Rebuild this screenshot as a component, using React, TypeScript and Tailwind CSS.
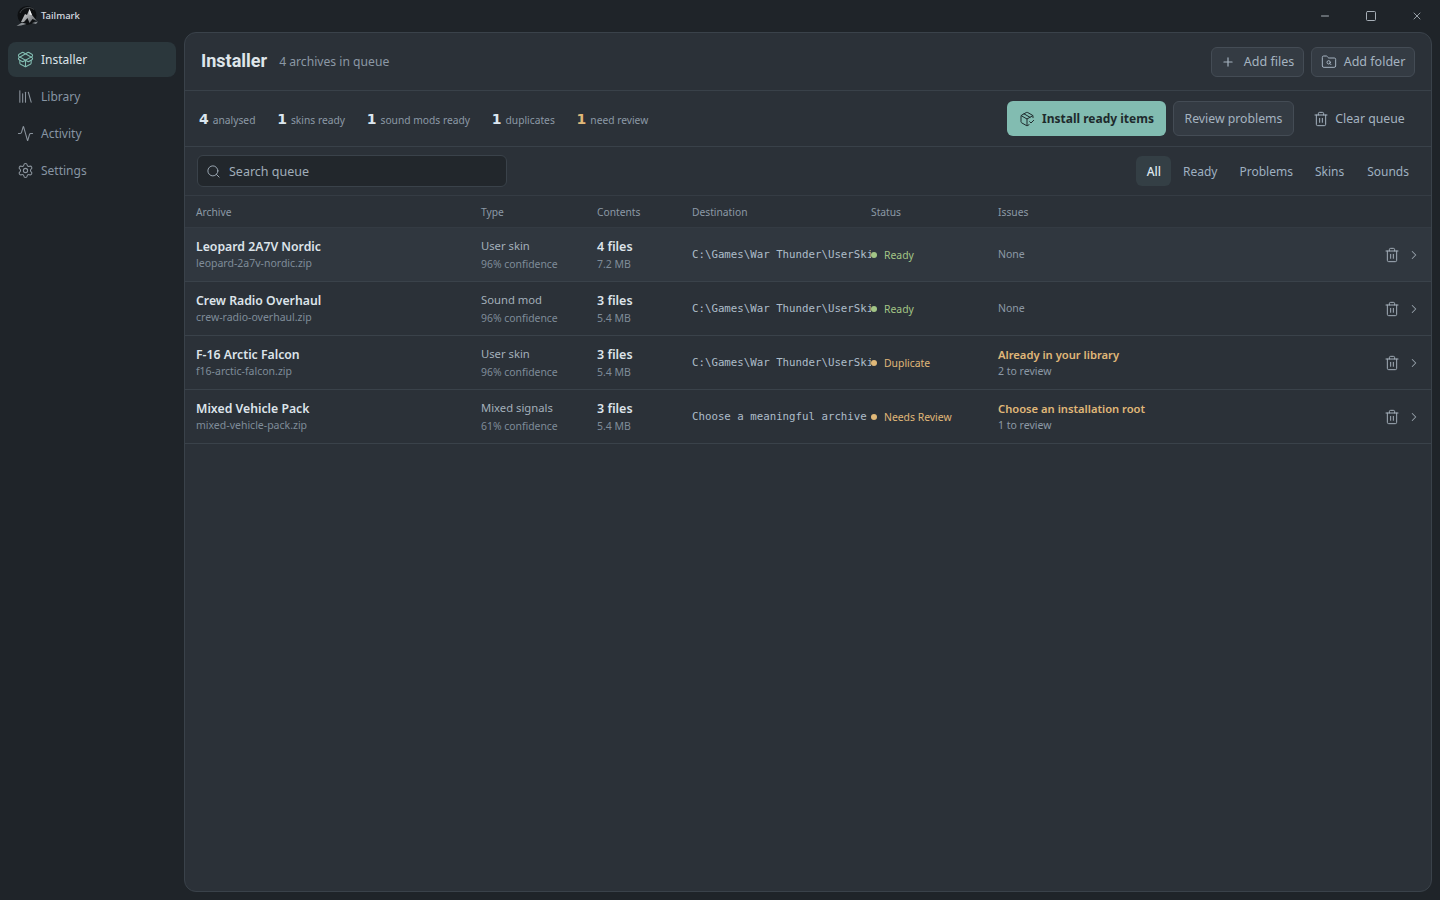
import {
  ChevronRight,
  FolderSearch2,
  Library,
  Activity,
  Minus,
  PackageCheck,
  PackageOpen,
  Plus,
  Search,
  Settings,
  Square,
  Trash2,
  X,
} from "lucide-react";

const navItems = [
  { label: "Installer", icon: PackageOpen, active: true },
  { label: "Library", icon: Library },
  { label: "Activity", icon: Activity },
  { label: "Settings", icon: Settings },
];

const stats = [
  { value: "4", label: "analysed" },
  { value: "1", label: "skins ready" },
  { value: "1", label: "sound mods ready" },
  { value: "1", label: "duplicates" },
  { value: "1", label: "need review", warn: true },
];

const filters = ["All", "Ready", "Problems", "Skins", "Sounds"];

const rows = [
  {
    name: "Leopard 2A7V Nordic",
    file: "leopard-2a7v-nordic.zip",
    type: "User skin",
    confidence: "96% confidence",
    files: "4 files",
    size: "7.2 MB",
    dest: "C:\\Games\\War Thunder\\UserSkins",
    status: "Ready",
    ok: true,
    issue: "None",
    hover: true,
  },
  {
    name: "Crew Radio Overhaul",
    file: "crew-radio-overhaul.zip",
    type: "Sound mod",
    confidence: "96% confidence",
    files: "3 files",
    size: "5.4 MB",
    dest: "C:\\Games\\War Thunder\\UserSkins",
    status: "Ready",
    ok: true,
    issue: "None",
  },
  {
    name: "F-16 Arctic Falcon",
    file: "f16-arctic-falcon.zip",
    type: "User skin",
    confidence: "96% confidence",
    files: "3 files",
    size: "5.4 MB",
    dest: "C:\\Games\\War Thunder\\UserSkins",
    status: "Duplicate",
    issue: "Already in your library",
    review: "2 to review",
  },
  {
    name: "Mixed Vehicle Pack",
    file: "mixed-vehicle-pack.zip",
    type: "Mixed signals",
    confidence: "61% confidence",
    files: "3 files",
    size: "5.4 MB",
    dest: "Choose a meaningful archive",
    status: "Needs Review",
    issue: "Choose an installation root",
    review: "1 to review",
  },
];

const gridCols = "grid grid-cols-[285px_116px_95px_179px_127px_1fr_48px] items-center pl-[11px] pr-[11px]";

function Logo() {
  return (
    <svg width="26" height="24" viewBox="0 0 26 24" className="shrink-0">
      <defs>
        <linearGradient id="peak" x1="0" y1="0" x2="1" y2="1">
          <stop offset="0" stopColor="#f0f1f2" />
          <stop offset="1" stopColor="#54585c" />
        </linearGradient>
      </defs>
      <circle cx="13" cy="11.5" r="9.5" fill="#0e1012" />
      <path d="M6 9 A9 9 0 0 1 20 5.5" fill="none" stroke="#4d5256" strokeWidth="0.8" />
      <path d="M7 18 L11 10 L13 11 L15.5 5 L18 11 L23 17 L18.5 15 L15.5 19 L13.5 14 L10 18 Z" fill="url(#peak)" />
      <path d="M15.5 5 L18 11 L15.5 10.5 Z" fill="#f4f5f6" />
      <path d="M2.5 22 L8 18.5 L12.5 20 L7 21.5 Z" fill="#8a8f93" />
      <path d="M18 19 L24 17.5 L22 20 Z" fill="#8a8f93" />
    </svg>
  );
}

export default function App() {
  return (
    <div className="h-[900px] w-[1440px] overflow-hidden bg-[#1f2429] font-['Noto_Sans',sans-serif] text-[#d5dce3]">
      {/* Title bar */}
      <div className="flex h-8 items-center justify-between">
        <div className="flex items-center gap-px pl-[14px]">
          <Logo />
          <span className="text-[9.5px] font-medium text-[#d8dde2]">Tailmark</span>
        </div>
        <div className="flex items-center text-[#a7afb7]">
          <div className="flex w-[46px] justify-center"><Minus size={12} strokeWidth={2} /></div>
          <div className="flex w-[46px] justify-center"><Square size={12} strokeWidth={2} /></div>
          <div className="flex w-[46px] justify-center"><X size={12} strokeWidth={1.75} /></div>
        </div>
      </div>

      <div className="flex h-[868px]">
        {/* Sidebar */}
        <nav className="flex w-[184px] shrink-0 flex-col gap-[2px] pl-2 pr-2 pt-[10px]">
          {navItems.map((item) => {
            const Icon = item.icon;
            return (
              <div
                key={item.label}
                className={`flex h-[35px] items-center gap-[7px] rounded-lg pl-[9px] text-[12px] ${
                  item.active ? "bg-[#2b373c] text-[#dce3e9]" : "text-[#8795a3]"
                }`}
              >
                <Icon size={17} strokeWidth={1.5} className={item.active ? "text-[#82bcb1]" : "text-[#8b949d]"} />
                {item.label}
              </div>
            );
          })}
        </nav>

        {/* Main panel */}
        <main className="mb-2 mr-2 flex flex-1 flex-col rounded-xl border border-[#3a424a] bg-[#2b3138]">
          <header className="flex h-[58px] shrink-0 items-center justify-between border-b border-[#394149] pl-4 pr-4">
            <div className="flex items-baseline gap-3 pb-[3px]">
              <h1 className="font-['Roboto',sans-serif] text-[18px] font-bold text-[#dfe5ea]">Installer</h1>
              <span className="-translate-y-px text-[12.15px] text-[#8b98a5]">4 archives in queue</span>
            </div>
            <div className="flex gap-[7px]">
              <button className="flex h-[30px] w-[93px] items-center justify-center gap-[9px] rounded-md border border-[#444c55] bg-[#343b43] pt-px text-[12.5px] text-[#a5b3c0]">
                <Plus size={14} />
                Add files
              </button>
              <button className="flex h-[30px] w-[104px] items-center justify-center gap-[7px] rounded-md border border-[#444c55] bg-[#343b43] pt-px text-[12.5px] text-[#a5b3c0]">
                <FolderSearch2 size={16} strokeWidth={1.5} />
                Add folder
              </button>
            </div>
          </header>

          <div className="flex h-14 shrink-0 items-center justify-between border-b border-[#394149] pl-[14px] pr-4">
            <div className="flex items-center gap-[21.75px] pt-px">
              {stats.map((s) => (
                <div key={s.label} className="flex items-baseline gap-[4px]">
                  <span className={`font-['DejaVu_Sans',sans-serif] text-[14px] font-bold ${s.warn ? "text-[#e0b878]" : "text-[#dbe6ef]"}`}>
                    {s.value}
                  </span>
                  <span className="text-[10.25px] text-[#8c99a6]">{s.label}</span>
                </div>
              ))}
            </div>
            <div className="flex items-center gap-[7px]">
              <button className="flex h-[35px] w-[159px] items-center justify-center gap-[7px] rounded-md bg-[#82bcb1] pt-px text-[12px] font-bold text-[#1e2a2c]">
                <PackageCheck size={16} strokeWidth={1.5} />
                Install ready items
              </button>
              <button className="h-[35px] w-[121px] rounded-md border border-[#444c55] bg-[#343b43] pt-px text-[12.25px] text-[#a5b3c0]">
                Review problems
              </button>
              <button className="flex h-[35px] w-[114px] items-center justify-center gap-[6px] pl-[2px] pt-px text-[12.25px] text-[#a5b3c0]">
                <Trash2 size={16} strokeWidth={1.5} />
                Clear queue
              </button>
            </div>
          </div>

          <div className="flex h-[49px] shrink-0 items-center justify-between border-b border-[#353c44] pl-3 pr-3">
            <div className="flex h-8 w-[310px] items-center gap-[8px] rounded-md border border-[#3a424a] bg-[#22272c] pl-[8px] text-[12.5px] text-[#a0adb9]">
              <Search size={15} strokeWidth={1.5} />
              <span className="pt-[3px]">Search queue</span>
            </div>
            <div className="flex items-center gap-[2px] text-[12px] text-[#9fb0c0]">
              {filters.map((f, i) => (
                <div
                  key={f}
                  className={`flex h-[30px] items-center justify-center rounded-md pr-[10px] pt-px ${
                    i === 0 ? "bg-[#343f45] pl-[11px] font-medium text-[#dce6ee]" : "pl-[10px]"
                  } ${i === 4 ? "ml-px" : ""}`}
                >
                  {f}
                </div>
              ))}
            </div>
          </div>

          <div className={`${gridCols} h-8 shrink-0 border-b border-[#343b43] pt-[2px] text-[10.25px] text-[#8c99a6]`}>
            <span>Archive</span>
            <span>Type</span>
            <span>Contents</span>
            <span>Destination</span>
            <span>Status</span>
            <span>Issues</span>
            <span />
          </div>

          {rows.map((r) => (
            <div
              key={r.name}
              className={`${gridCols} h-[54px] shrink-0 border-b border-[#3a424a] ${r.hover ? "bg-[#30373f]" : ""}`}
            >
              <div className="flex flex-col">
                <span className="text-[12.25px] leading-[18px] font-semibold text-[#dde4ea]">{r.name}</span>
                <span className="text-[10.5px] leading-[15px] text-[#7f8c99]">{r.file}</span>
              </div>
              <div className="flex flex-col">
                <span className="text-[11.25px] leading-[18px] text-[#a3afba]">{r.type}</span>
                <span className="pt-px text-[10.4px] leading-[17px] text-[#7f8c99]">{r.confidence}</span>
              </div>
              <div className="flex flex-col pt-[2px]">
                <span className="text-[12.5px] leading-[18px] font-semibold text-[#dde4ea]">{r.files}</span>
                <span className="text-[10.5px] leading-[17px] text-[#7f8c99]">{r.size}</span>
              </div>
              <div className="overflow-hidden pt-px font-['DejaVu_Sans_Mono',monospace] text-[10.75px] font-medium whitespace-nowrap text-[#aebdca]">
                {r.dest}
              </div>
              <div className="flex items-center gap-[7px] pt-px">
                <span className={`h-[6px] w-[6px] rounded-full ${r.ok ? "bg-[#a3c586]" : "bg-[#e0b878]"}`} />
                <span className={`pt-px text-[10.4px] ${r.ok ? "text-[#a3c586]" : "text-[#e0b878]"}`}>{r.status}</span>
              </div>
              {r.review ? (
                <div className="flex flex-col">
                  <span className="text-[11.2px] leading-[17px] font-semibold text-[#e0b878]">{r.issue}</span>
                  <span className="mt-px text-[10.5px] leading-[15px] text-[#8c99a6]">{r.review}</span>
                </div>
              ) : (
                <span className="text-[10.5px] text-[#8c99a6]">{r.issue}</span>
              )}
              <div className="flex items-center justify-end gap-[7px] text-[#a3aeb9]">
                <Trash2 size={16} strokeWidth={1.5} />
                <ChevronRight size={14} strokeWidth={1.75} className="-mr-px text-[#96a0aa]" />
              </div>
            </div>
          ))}
        </main>
      </div>
    </div>
  );
}
